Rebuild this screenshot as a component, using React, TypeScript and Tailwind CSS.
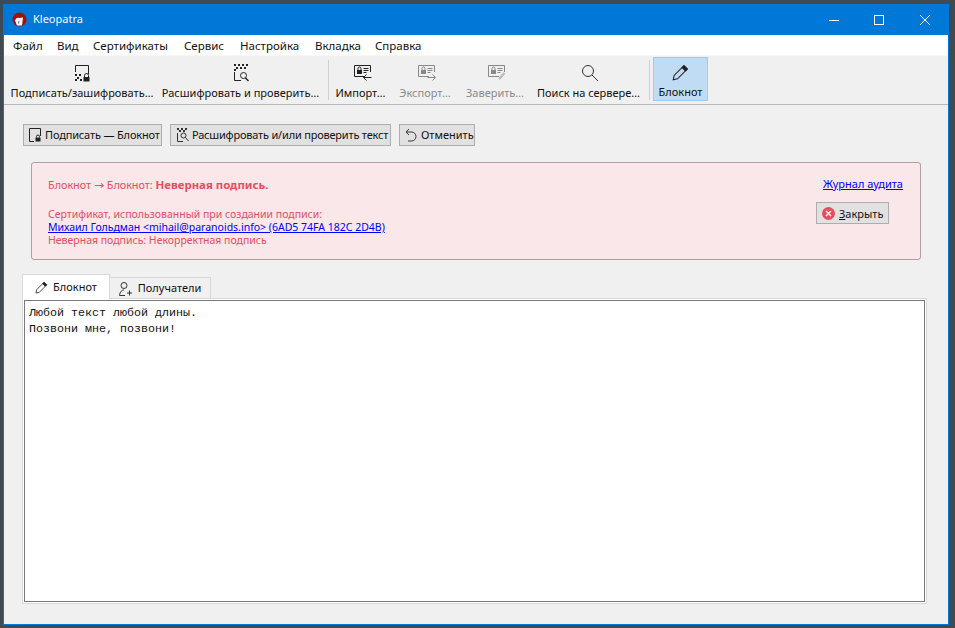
import React, { FC, ReactNode } from 'react';

const menuItems = [
  { label: 'Файл', width: 'w-[44px]' },
  { label: 'Вид', width: 'w-[36px]' },
  { label: 'Сертификаты', width: 'w-[91px]' },
  { label: 'Сервис', width: 'w-[56px]' },
  { label: 'Настройка', width: 'w-[75px]' },
  { label: 'Вкладка', width: 'w-[60px]' },
  { label: 'Справка', width: 'w-[60px]' },
];

const SignIcon = () => (
  <svg width="16" height="18" viewBox="0 0 16 18" fill="none" stroke="#222">
    <path d="M1.5 8V1.5H14.5V10" />
    <path d="M1 10h2v2H1zM5 10h2v2H5zM3 13h2v2H3zM1 15h2v2H1zM6 15h2v2H6z" fill="#222" stroke="none" />
    <path d="M10.5 13v-1.5a2 2 0 0 1 4 0V13" strokeWidth="1" />
    <rect x="9.5" y="13" width="6" height="4.5" fill="#222" stroke="none" />
  </svg>
);

const DecryptIcon = () => (
  <svg width="16" height="18" viewBox="0 0 16 18" fill="none" stroke="#222">
    <path d="M1 0h2v2H1zM5 0h2v2H5zM9 0h2v2H9zM13 0h2v2h-2zM3 3h2v2H3zM7 3h2v2H7zM11 3h2v2h-2zM1 5h2v2H1z" fill="#222" stroke="none" />
    <path d="M1.5 8V16.5H8" />
    <circle cx="10.5" cy="11.5" r="3" />
    <path d="M12.5 14L15.5 17" strokeWidth="1.4" />
  </svg>
);

const CertIcon: FC<{ color: string; variant: 'import' | 'export' | 'certify' }> = ({ color, variant }) => (
  <svg className="ml-[4px]" width="18" height="18" viewBox="0 0 18 18" fill="none" stroke={color}>
    <path d="M11 12.5H0.5V1.5H16.5V8" />
    <rect x="3" y="6" width="5" height="4" fill={color} stroke="none" />
    <path d="M4 6V4.5a1.5 1.5 0 0 1 3 0V6" />
    <path d="M9.5 4.5H14.5M9.5 6.5H14.5M9.5 8.5H12.5" />
    {variant === 'import' && <path d="M17.5 13.5H9.5M12.5 10.5L9.5 13.5L12.5 16.5" />}
    {variant === 'export' && <path d="M9.5 13.5H17.5M14.5 10.5L17.5 13.5L14.5 16.5" />}
    {variant === 'certify' && <path d="M11 15L16.5 9" strokeWidth="2.4" stroke="#bbb" />}
  </svg>
);

const SearchIcon = () => (
  <svg className="ml-[3px]" width="18" height="18" viewBox="0 0 18 18" fill="none" stroke="#333">
    <circle cx="7" cy="7" r="5.5" />
    <path d="M11 11L17 17" />
  </svg>
);

const PencilIcon: FC<{ size: number }> = ({ size }) => (
  <svg className="shrink-0" width={size} height={size} viewBox="0 0 16 16" fill="none" stroke="#222">
    <path d="M1.2 14.8L2 10.8L11.2 1.6L14.4 4.8L5.2 14L1.2 14.8Z" />
    <path d="M9.6 3.2L12.8 6.4" />
    <path d="M11.2 1.6L14.4 4.8L12.8 6.4L9.6 3.2Z" fill="#222" />
  </svg>
);

const ToolButton: FC<{ label: string; width: string; icon: ReactNode; disabled?: boolean }> = ({
  label,
  width,
  icon,
  disabled,
}) => (
  <div className={`${width} flex flex-col items-center shrink-0`}>
    <div className="h-[24px] mt-[5px] flex items-center justify-center">{icon}</div>
    <span className={`text-[11px] leading-[16px] whitespace-nowrap ${disabled ? 'text-[#8a8a8a]' : 'text-[#111]'}`}>
      {label}
    </span>
  </div>
);

const ActionButton: FC<{ icon: ReactNode; children: ReactNode; width: string }> = ({ icon, children, width }) => (
  <button className={`${width} h-[22px] flex items-center gap-[4px] pl-[5px] bg-[#e1e1e1] border border-[#adadad] text-[11px] text-[#111] whitespace-nowrap shrink-0`}>
    {icon}
    {children}
  </button>
);

export default function App() {
  return (
    <div className="w-[955px] h-[628px] bg-[#3f4a52] pt-[4px] pl-[3px] pr-[6px] pb-[3px] overflow-hidden font-['Noto_Sans',sans-serif]">
      <div className="w-full h-full flex flex-col border border-[#0078d7] border-t-0 bg-[#f0f0f0]">
        {/* title bar */}
        <div className="h-[31px] bg-[#0078d7] flex items-center shrink-0 text-white">
          <svg className="ml-[8px]" width="15" height="15" viewBox="0 0 15 15">
            <circle cx="7.5" cy="7.5" r="7" fill="#a80d0d" />
            <path d="M3 8.5C4 6 6 5.5 7 6L11 5.5L10 13.5L5 13.5Z" fill="#fff" />
            <path d="M7 9L6.6 11.5" stroke="#555" />
          </svg>
          <span className="ml-[6px] text-[11px] text-[#f2f8fd]">Kleopatra</span>
          <div className="ml-auto flex items-center">
            <svg className="mr-[35px]" width="10" height="10" viewBox="0 0 10 10" stroke="#fff" fill="none">
              <path d="M0 5.5H10" />
            </svg>
            <svg className="mr-[36px]" width="10" height="10" viewBox="0 0 10 10" stroke="#fff" fill="none">
              <rect x="0.5" y="0.5" width="9" height="9" />
            </svg>
            <svg className="mr-[18px]" width="10" height="10" viewBox="0 0 10 10" stroke="#fff" fill="none">
              <path d="M0 0L10 10M10 0L0 10" />
            </svg>
          </div>
        </div>

        {/* menu bar */}
        <div className="h-[20px] bg-white flex items-center pl-[9px] pt-[1px] shrink-0 text-[11.5px] text-[#111]">
          {menuItems.map((item) => (
            <span key={item.label} className={`${item.width} shrink-0 whitespace-nowrap`}>
              {item.label}
            </span>
          ))}
        </div>

        {/* toolbar */}
        <div className="h-[50px] flex items-start pl-[5px] border-t border-t-[#f7f7f7] border-b border-b-[#b9b9b9] shrink-0">
          <ToolButton label="Подписать/зашифровать…" width="w-[146px]" icon={<SignIcon />} />
          <ToolButton label="Расшифровать и проверить…" width="w-[171px]" icon={<DecryptIcon />} />
          <div className="w-px h-[40px] bg-[#d0d0d0] mt-[4px] ml-[2px] shrink-0" />
          <ToolButton label="Импорт…" width="w-[63px]" icon={<CertIcon color="#222" variant="import" />} />
          <ToolButton label="Экспорт…" width="w-[66px]" icon={<CertIcon color="#888" variant="export" />} disabled />
          <ToolButton label="Заверить…" width="w-[74px]" icon={<CertIcon color="#888" variant="certify" />} disabled />
          <ToolButton label="Поиск на сервере…" width="w-[113px]" icon={<SearchIcon />} />
          <div className="w-px h-[40px] bg-[#d0d0d0] mt-[4px] ml-[4px] mr-[3px] shrink-0" />
          <div className="w-[55px] h-[44px] mt-[1px] flex flex-col items-center bg-[#bfdcf4] border border-[#9bcdf5] shrink-0">
            <div className="h-[22px] mt-[3px] flex items-center">
              <PencilIcon size={17} />
            </div>
            <span className="text-[11px] leading-[16px] mt-[1px] text-[#111]">Блокнот</span>
          </div>
        </div>

        {/* content */}
        <div className="flex-1 min-h-0 flex flex-col pt-[19px] pl-[19px] pr-[21px] pb-[20px]">
          <div className="flex gap-[8px] shrink-0">
            <ActionButton
              width="w-[139px]"
              icon={
                <svg className="shrink-0" width="12" height="14" viewBox="0 0 12 14" fill="none" stroke="#222">
                  <path d="M0.5 13.5V0.5H11.5V8" />
                  <path d="M0.5 13.5H5" />
                  <rect x="6.5" y="9.5" width="5" height="4" fill="#222" stroke="none" />
                  <path d="M7.5 9.5V8.5a1.5 1.5 0 0 1 3 0V9.5" />
                </svg>
              }
            >
              <span className="pt-[1px] tracking-[-0.16px]">Подписать — Блокнот</span>
            </ActionButton>
            <ActionButton
              width="w-[221px]"
              icon={
                <svg className="shrink-0" width="13" height="14" viewBox="0 0 13 14" fill="none" stroke="#333">
                  <path d="M1 0h2v2H1zM5 0h2v2H5zM9 0h2v2H9zM3 2h2v2H3zM7 2h2v2H7z" fill="#333" stroke="none" />
                  <path d="M1.5 5V13.5H7" />
                  <circle cx="7.5" cy="7.5" r="2.5" />
                  <path d="M9.5 9.5L12.5 13" />
                </svg>
              }
            >
              <span className="pt-[1px] -ml-px tracking-[-0.2px]">Расшифровать и/или проверить текст</span>
            </ActionButton>
            <ActionButton
              width="w-[76px]"
              icon={
                <svg className="shrink-0" width="12" height="14" viewBox="0 0 12 14" fill="none" stroke="#333">
                  <path d="M4 1L1 4L4 7" />
                  <path d="M1 4H6.5a4.5 4.5 0 0 1 0 9H3" />
                </svg>
              }
            >
              <span className="pt-[1px]">Отменить</span>
            </ActionButton>
          </div>

          {/* signature result */}
          <div className="mt-[16px] ml-[8px] mr-[6px] h-[98px] shrink-0 flex justify-between rounded-[3px] border border-[#b09ea1] bg-[#f9e7e9] pl-[16px] pr-[17px] pt-[14px] text-[10.5px] leading-[13px] text-[#e54d62]">
            <div>
              <div className="leading-[15px] text-[10.8px]">
                Блокнот <span className="font-['DejaVu_Sans',sans-serif] text-[12px]">→</span> Блокнот:{' '}
                <b className="font-bold text-[11.4px]">Неверная подпись.</b>
              </div>
              <div className="mt-[15px]">Сертификат, использованный при создании подписи:</div>
              <a className="text-[#0000ff] underline block">Михаил Гольдман &lt;mihail@paranoids.info&gt; (6AD5 74FA 182C 2D4B)</a>
              <div>Неверная подпись: Некорректная подпись</div>
            </div>
            <div className="flex flex-col items-end">
              <a className="text-[#0000ff] underline text-[11px] leading-[13px]">Журнал аудита</a>
              <button className="mt-[12px] mr-[14px] w-[73px] h-[22px] flex items-center pl-[5px] gap-[4px] bg-[#e1e1e1] border border-[#adadad] text-[11px] text-[#111]">
                <svg className="shrink-0" width="13" height="13" viewBox="0 0 13 13" fill="none">
                  <circle cx="6.5" cy="6.5" r="6.5" fill="#e2505f" />
                  <path d="M4 4L9 9M9 4L4 9" stroke="#fff" strokeWidth="1.3" />
                </svg>
                <span>
                  <span className="underline">З</span>акрыть
                </span>
              </button>
            </div>
          </div>

          {/* tabs */}
          <div className="mt-[14px] -ml-px flex items-end h-[25px] shrink-0">
            <div className="w-[88px] h-[25px] flex items-center justify-center gap-[5px] bg-white border border-b-0 border-[#d9d9d9] text-[11px] text-[#111] relative z-10">
              <PencilIcon size={13} />
              Блокнот
            </div>
            <div className="w-[101px] h-[22px] flex items-center justify-center gap-[5px] bg-[#f0f0f0] border border-b-0 border-l-0 border-[#d9d9d9] text-[11px] text-[#111]">
              <svg className="shrink-0" width="14" height="14" viewBox="0 0 14 14" fill="none" stroke="#333">
                <circle cx="5" cy="3.5" r="3" />
                <path d="M0.5 13.5C1 9.5 3 8 5 8" />
                <path d="M0.5 13.5H6M10.5 8.5V13.5M8 11H13" />
              </svg>
              Получатели
            </div>
          </div>
          <div className="flex-1 min-h-0 -ml-px bg-white border border-[#d9d9d9] p-px -mt-px">
            <div className="w-full h-full border border-[#7a7a7a] bg-white pl-[4px] pt-[4px] font-['Liberation_Mono',monospace] text-[11.67px] leading-[16px] text-[#111]">
              <div>Любой текст любой длины.</div>
              <div>Позвони мне, позвони!</div>
            </div>
          </div>
        </div>
      </div>
    </div>
  );
}
